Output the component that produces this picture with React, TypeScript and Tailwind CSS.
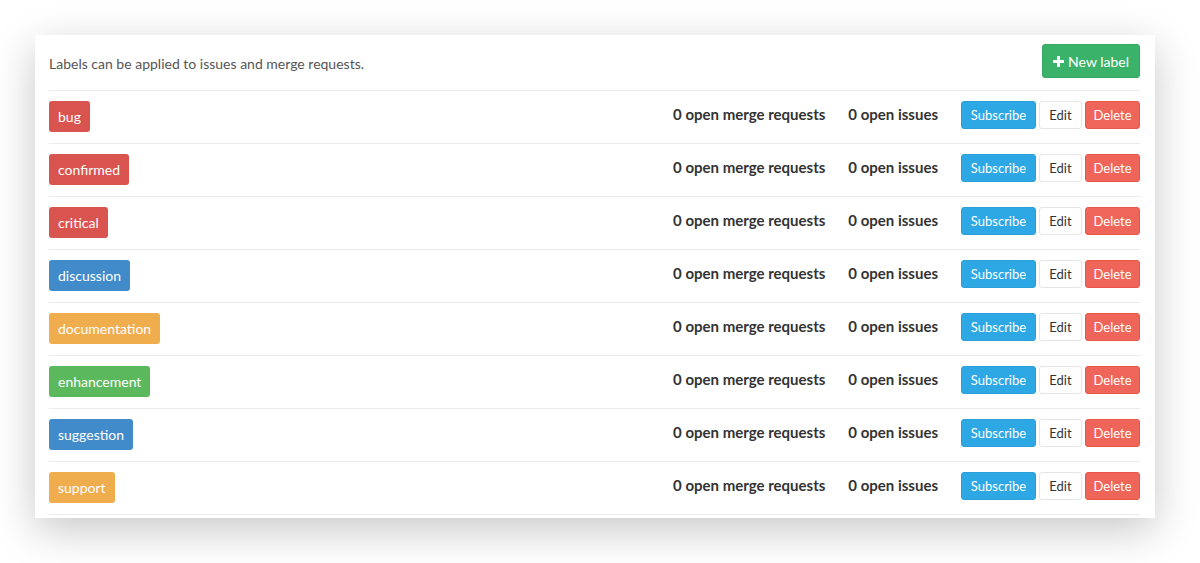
const labels = [
  { name: "bug", color: "bg-[#d9534f]" },
  { name: "confirmed", color: "bg-[#d9534f]" },
  { name: "critical", color: "bg-[#d9534f]" },
  { name: "discussion", color: "bg-[#428bca]" },
  { name: "documentation", color: "bg-[#f0ad4e]" },
  { name: "enhancement", color: "bg-[#5cb85c]" },
  { name: "suggestion", color: "bg-[#428bca]" },
  { name: "support", color: "bg-[#f0ad4e]" },
];

function PlusIcon() {
  return (
    <svg width="11" height="11" viewBox="0 0 11 11" className="fill-white">
      <path d="M4 0h3v4h4v3H7v4H4V7H0V4h4z" />
    </svg>
  );
}

export default function App() {
  return (
    <div className="min-h-[563px] bg-white pl-[35px] pt-[35px] font-['Lato',sans-serif]">
      <div className="w-[1120px] bg-white pl-[14px] pr-[15px] pb-[3px] shadow-[0_12px_40px_rgba(0,0,0,0.22)]">
        {/* Header */}
        <div className="flex items-start justify-between border-b border-[#ececec] pt-[9px] pb-[12px]">
          <p className="pt-[8px] text-[14px] leading-[24px] text-[#555]">
            Labels can be applied to issues and merge requests.
          </p>
          <button className="flex h-[34px] items-center gap-[4px] rounded-[3px] border border-[#35a862] bg-[#3bb26a] px-[10px] text-[14px] text-white">
            <PlusIcon />
            New label
          </button>
        </div>

        {/* Rows */}
        {labels.map((l) => (
          <div
            key={l.name}
            className="flex h-[53px] items-start justify-between border-b border-[#ececec] pt-[10px]"
          >
            <span
              className={`${l.color} flex h-[31px] items-center rounded-[3px] px-[9px] text-[14px] text-white`}
            >
              {l.name}
            </span>
            <div className="flex items-start">
              <span className="text-[15px] font-bold leading-[26px] text-[#333]">
                0 open merge requests
              </span>
              <span className="ml-[23px] text-[15px] font-bold leading-[26px] text-[#333]">
                0 open issues
              </span>
              <div className="ml-[23px] flex gap-[3px]">
                <button className="h-[28px] w-[75px] rounded-[3px] border border-[#2b9fd8] bg-[#2ea8e5] pt-[1px] text-[13px] text-white">
                  Subscribe
                </button>
                <button className="h-[28px] w-[43px] rounded-[3px] border border-[#e5e5e5] bg-white pt-[1px] text-[13px] text-[#333]">
                  Edit
                </button>
                <button className="h-[28px] w-[55px] rounded-[3px] border border-[#e8564a] bg-[#f0655a] pt-[1px] text-[13px] text-white">
                  Delete
                </button>
              </div>
            </div>
          </div>
        ))}
      </div>
    </div>
  );
}
